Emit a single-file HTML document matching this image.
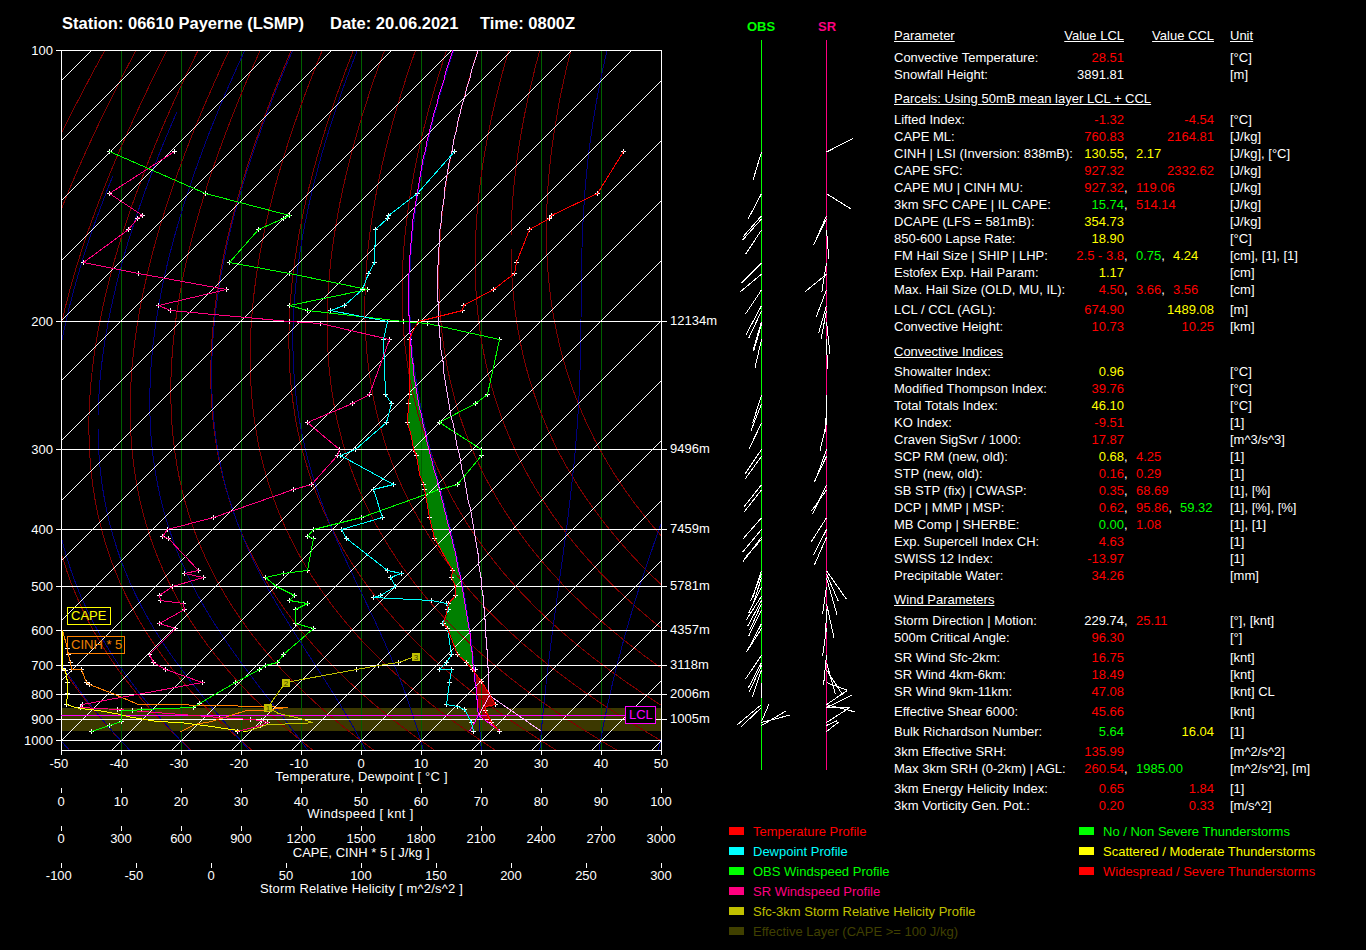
<!DOCTYPE html><html><head><meta charset="utf-8"><style>
html,body{margin:0;padding:0;background:#000;width:1366px;height:950px;overflow:hidden}
body{position:relative;font-family:"Liberation Sans",sans-serif;color:#fff}
.t{position:absolute;white-space:pre;font-size:13px;line-height:15px}
svg{position:absolute;left:0;top:0}
</style></head><body>
<svg width="1366" height="950" viewBox="0 0 1366 950" shape-rendering="crispEdges" fill="none" stroke-width="1">
<defs><clipPath id="c"><rect x="61" y="50" width="601" height="700"/></clipPath></defs>
<g clip-path="url(#c)">
<rect x="61" y="708" width="601" height="23" fill="#3c3800"/>
<path d="M474.1 666.5L473.4 660.5L472.8 654.5L472.0 648.5L471.3 642.5L470.5 636.5L469.7 630.5L468.8 624.5L468.0 618.5L467.0 612.5L466.1 606.5L465.1 600.5L464.0 594.5L462.9 588.5L461.8 582.5L460.7 576.5L459.4 570.5L458.2 564.5L456.9 558.5L455.6 552.5L454.2 546.5L452.8 540.5L451.4 534.5L449.9 528.5L448.4 522.5L446.9 516.5L445.4 510.5L443.8 504.5L442.3 498.5L440.7 492.5L439.1 486.5L437.5 480.5L436.0 474.5L434.4 468.5L432.9 462.5L431.4 456.5L429.9 450.5L428.4 444.5L427.0 438.5L425.6 432.5L424.3 426.5L422.9 420.5L421.7 414.5L420.5 408.5L419.3 402.5L418.2 396.5L417.2 390.5L416.2 384.5L415.3 378.5L414.4 372.5L413.6 366.5L412.9 360.5L412.2 354.5L411.6 348.5L411.1 342.5L410.6 336.5L412.5 331.5L409.9 339.5L409.9 395.3L408.8 403.8L407.8 423.1L411.5 436.8L414.1 449.5L417.3 456.4L419.9 474.7L423.6 484.8L424.7 489.9L426.7 500.5L430.0 517.8L435.1 539.4L452.6 570.8L451.5 577.8L455.7 586.8L455.7 596.3L449.4 603.7L448.3 609.6L444.1 623.7L448.3 628.5L457.8 655.2L467.3 662.6L472.6 670.0 Z" fill="#008000" shape-rendering="auto"/>
<path d="M501.1 731.5L478.7 715.7L478.1 708.5L477.6 702.5L477.1 696.5L476.5 690.5L475.9 684.5L475.3 678.5L474.7 672.5L474.1 666.5L472.6 670.0L481.6 681.5L490.0 694.7L495.8 704.7L485.8 707.3L486.3 711.0L491.5 723.1L500.0 731.5 Z" fill="#a00000" shape-rendering="auto"/>
<path d="M121.5 50V750M181.5 50V750M241.5 50V750M301.5 50V750M361.5 50V750M421.5 50V750M481.5 50V750M541.5 50V750M601.5 50V750" stroke="#006000"/>
<path d="M71.1 752.0L60.2 740.0L50.0 728.0L40.4 716.0L31.4 704.0L23.1 692.0L15.4 680.0L8.2 668.0L1.7 656.0L-4.4 644.0L-9.8 632.0L-14.8 620.0L-19.2 608.0L-23.2 596.0L-26.6 584.0L-29.7 572.0L-32.3 560.0L-34.4 548.0L-36.2 536.0L-37.5 524.0L-38.5 512.0L-39.2 500.0L-39.5 488.0L-39.4 476.0L-39.0 464.0L-38.4 452.0L-37.4 440.0L-36.1 428.0L-34.6 416.0L-32.7 404.0L-30.7 392.0L-28.4 380.0L-25.8 368.0L-23.0 356.0L-20.0 344.0L-16.8 332.0L-13.4 320.0L-9.8 308.0L-6.0 296.0L-2.0 284.0L2.2 272.0L6.5 260.0L11.0 248.0L15.7 236.0L20.5 224.0L25.5 212.0L30.6 200.0L35.8 188.0L41.2 176.0L46.8 164.0L52.4 152.0L58.2 140.0L64.1 128.0L70.1 116.0L76.2 104.0L82.5 92.0L88.8 80.0L95.2 68.0L101.8 56.0L105.1 50.0L108.4 44.0M132.1 752.0L120.2 740.0L109.0 728.0L98.4 716.0L88.5 704.0L79.2 692.0L70.6 680.0L62.6 668.0L55.2 656.0L48.4 644.0L42.2 632.0L36.5 620.0L31.3 608.0L26.6 596.0L22.4 584.0L18.7 572.0L15.5 560.0L12.7 548.0L10.3 536.0L8.4 524.0L6.8 512.0L5.6 500.0L4.7 488.0L4.3 476.0L4.1 464.0L4.3 452.0L4.8 440.0L5.6 428.0L6.6 416.0L8.0 404.0L9.6 392.0L11.5 380.0L13.6 368.0L16.0 356.0L18.6 344.0L21.4 332.0L24.4 320.0L27.7 308.0L31.1 296.0L34.7 284.0L38.6 272.0L42.6 260.0L46.7 248.0L51.1 236.0L55.6 224.0L60.2 212.0L65.0 200.0L70.0 188.0L75.1 176.0L80.3 164.0L85.7 152.0L91.2 140.0L96.8 128.0L102.5 116.0L108.4 104.0L114.4 92.0L120.5 80.0L126.7 68.0L133.0 56.0L136.1 50.0L139.4 44.0M193.1 752.0L180.2 740.0L167.9 728.0L156.4 716.0L145.6 704.0L135.4 692.0L125.9 680.0L117.0 668.0L108.8 656.0L101.2 644.0L94.2 632.0L87.7 620.0L81.8 608.0L76.4 596.0L71.5 584.0L67.2 572.0L63.3 560.0L59.8 548.0L56.8 536.0L54.3 524.0L52.1 512.0L50.3 500.0L49.0 488.0L47.9 476.0L47.3 464.0L46.9 452.0L46.9 440.0L47.2 428.0L47.8 416.0L48.7 404.0L49.9 392.0L51.4 380.0L53.1 368.0L55.0 356.0L57.2 344.0L59.6 332.0L62.3 320.0L65.1 308.0L68.2 296.0L71.5 284.0L74.9 272.0L78.6 260.0L82.4 248.0L86.4 236.0L90.6 224.0L95.0 212.0L99.5 200.0L104.1 188.0L108.9 176.0L113.9 164.0L118.9 152.0L124.2 140.0L129.5 128.0L135.0 116.0L140.6 104.0L146.3 92.0L152.1 80.0L158.1 68.0L164.1 56.0L167.2 50.0L170.3 44.0M254.1 752.0L240.1 740.0L226.9 728.0L214.4 716.0L202.6 704.0L191.5 692.0L181.2 680.0L171.4 668.0L162.4 656.0L154.0 644.0L146.1 632.0L138.9 620.0L132.3 608.0L126.2 596.0L120.6 584.0L115.6 572.0L111.0 560.0L106.9 548.0L103.3 536.0L100.2 524.0L97.4 512.0L95.1 500.0L93.2 488.0L91.6 476.0L90.4 464.0L89.6 452.0L89.1 440.0L88.9 428.0L89.0 416.0L89.5 404.0L90.2 392.0L91.2 380.0L92.5 368.0L94.0 356.0L95.8 344.0L97.9 332.0L100.1 320.0L102.6 308.0L105.3 296.0L108.2 284.0L111.3 272.0L114.6 260.0L118.1 248.0L121.8 236.0L125.7 224.0L129.7 212.0L133.9 200.0L138.3 188.0L142.8 176.0L147.4 164.0L152.2 152.0L157.2 140.0L162.2 128.0L167.4 116.0L172.8 104.0L178.2 92.0L183.8 80.0L189.5 68.0L195.3 56.0L198.3 50.0L201.2 44.0M315.1 752.0L300.1 740.0L285.9 728.0L272.4 716.0L259.7 704.0L247.7 692.0L236.4 680.0L225.9 668.0L216.0 656.0L206.7 644.0L198.1 632.0L190.1 620.0L182.8 608.0L175.9 596.0L169.7 584.0L164.0 572.0L158.8 560.0L154.1 548.0L149.8 536.0L146.1 524.0L142.7 512.0L139.8 500.0L137.4 488.0L135.3 476.0L133.6 464.0L132.2 452.0L131.2 440.0L130.6 428.0L130.2 416.0L130.2 404.0L130.5 392.0L131.1 380.0L131.9 368.0L133.1 356.0L134.4 344.0L136.1 332.0L138.0 320.0L140.1 308.0L142.4 296.0L145.0 284.0L147.7 272.0L150.7 260.0L153.9 248.0L157.2 236.0L160.7 224.0L164.5 212.0L168.3 200.0L172.4 188.0L176.6 176.0L181.0 164.0L185.5 152.0L190.1 140.0L194.9 128.0L199.9 116.0L204.9 104.0L210.2 92.0L215.5 80.0L220.9 68.0L226.5 56.0L229.3 50.0L232.2 44.0M376.1 752.0L360.1 740.0L344.8 728.0L330.4 716.0L316.7 704.0L303.8 692.0L291.7 680.0L280.3 668.0L269.5 656.0L259.5 644.0L250.1 632.0L241.4 620.0L233.2 608.0L225.7 596.0L218.8 584.0L212.4 572.0L206.5 560.0L201.2 548.0L196.3 536.0L192.0 524.0L188.1 512.0L184.6 500.0L181.6 488.0L178.9 476.0L176.7 464.0L174.9 452.0L173.4 440.0L172.2 428.0L171.4 416.0L171.0 404.0L170.8 392.0L170.9 380.0L171.4 368.0L172.1 356.0L173.1 344.0L174.3 332.0L175.8 320.0L177.5 308.0L179.5 296.0L181.7 284.0L184.1 272.0L186.7 260.0L189.6 248.0L192.6 236.0L195.8 224.0L199.2 212.0L202.8 200.0L206.5 188.0L210.4 176.0L214.5 164.0L218.7 152.0L223.1 140.0L227.7 128.0L232.3 116.0L237.1 104.0L242.1 92.0L247.1 80.0L252.3 68.0L257.7 56.0L260.4 50.0L263.1 44.0M437.1 752.0L420.0 740.0L403.8 728.0L388.4 716.0L373.8 704.0L360.0 692.0L347.0 680.0L334.7 668.0L323.1 656.0L312.3 644.0L302.1 632.0L292.6 620.0L283.7 608.0L275.5 596.0L267.9 584.0L260.8 572.0L254.3 560.0L248.3 548.0L242.8 536.0L237.9 524.0L233.4 512.0L229.4 500.0L225.8 488.0L222.6 476.0L219.9 464.0L217.5 452.0L215.5 440.0L213.9 428.0L212.6 416.0L211.7 404.0L211.1 392.0L210.8 380.0L210.8 368.0L211.1 356.0L211.7 344.0L212.5 332.0L213.7 320.0L215.0 308.0L216.6 296.0L218.5 284.0L220.5 272.0L222.8 260.0L225.3 248.0L228.0 236.0L230.9 224.0L234.0 212.0L237.2 200.0L240.7 188.0L244.3 176.0L248.1 164.0L252.0 152.0L256.1 140.0L260.4 128.0L264.8 116.0L269.3 104.0L274.0 92.0L278.8 80.0L283.8 68.0L288.8 56.0L291.4 50.0L294.0 44.0M498.1 752.0L480.0 740.0L462.8 728.0L446.4 716.0L430.9 704.0L416.1 692.0L402.2 680.0L389.1 668.0L376.7 656.0L365.0 644.0L354.1 632.0L343.8 620.0L334.2 608.0L325.3 596.0L316.9 584.0L309.2 572.0L302.0 560.0L295.4 548.0L289.3 536.0L283.8 524.0L278.7 512.0L274.1 500.0L270.0 488.0L266.3 476.0L263.0 464.0L260.1 452.0L257.7 440.0L255.6 428.0L253.8 416.0L252.4 404.0L251.4 392.0L250.7 380.0L250.3 368.0L250.1 356.0L250.3 344.0L250.8 332.0L251.5 320.0L252.5 308.0L253.7 296.0L255.2 284.0L256.9 272.0L258.8 260.0L261.0 248.0L263.4 236.0L265.9 224.0L268.7 212.0L271.7 200.0L274.8 188.0L278.1 176.0L281.6 164.0L285.3 152.0L289.1 140.0L293.1 128.0L297.2 116.0L301.5 104.0L305.9 92.0L310.5 80.0L315.2 68.0L320.0 56.0L322.5 50.0L325.0 44.0M559.1 752.0L540.0 740.0L521.7 728.0L504.4 716.0L487.9 704.0L472.3 692.0L457.5 680.0L443.5 668.0L430.3 656.0L417.8 644.0L406.1 632.0L395.1 620.0L384.7 608.0L375.0 596.0L366.0 584.0L357.6 572.0L349.8 560.0L342.5 548.0L335.8 536.0L329.7 524.0L324.0 512.0L318.9 500.0L314.2 488.0L310.0 476.0L306.2 464.0L302.8 452.0L299.8 440.0L297.2 428.0L295.0 416.0L293.2 404.0L291.7 392.0L290.5 380.0L289.7 368.0L289.2 356.0L288.9 344.0L289.0 332.0L289.3 320.0L289.9 308.0L290.8 296.0L291.9 284.0L293.3 272.0L294.9 260.0L296.7 248.0L298.7 236.0L301.0 224.0L303.4 212.0L306.1 200.0L308.9 188.0L312.0 176.0L315.2 164.0L318.5 152.0L322.1 140.0L325.8 128.0L329.7 116.0L333.7 104.0L337.8 92.0L342.2 80.0L346.6 68.0L351.2 56.0L353.5 50.0L355.9 44.0M620.1 752.0L599.9 740.0L580.7 728.0L562.4 716.0L545.0 704.0L528.4 692.0L512.8 680.0L497.9 668.0L483.8 656.0L470.6 644.0L458.1 632.0L446.3 620.0L435.2 608.0L424.8 596.0L415.1 584.0L406.0 572.0L397.5 560.0L389.7 548.0L382.4 536.0L375.6 524.0L369.4 512.0L363.6 500.0L358.4 488.0L353.6 476.0L349.3 464.0L345.4 452.0L342.0 440.0L338.9 428.0L336.2 416.0L333.9 404.0L332.0 392.0L330.4 380.0L329.1 368.0L328.2 356.0L327.6 344.0L327.2 332.0L327.2 320.0L327.4 308.0L327.9 296.0L328.7 284.0L329.7 272.0L330.9 260.0L332.4 248.0L334.1 236.0L336.1 224.0L338.2 212.0L340.5 200.0L343.1 188.0L345.8 176.0L348.7 164.0L351.8 152.0L355.1 140.0L358.5 128.0L362.1 116.0L365.9 104.0L369.8 92.0L373.8 80.0L378.0 68.0L382.4 56.0L384.6 50.0L386.8 44.0M681.1 752.0L659.9 740.0L639.7 728.0L620.4 716.0L602.0 704.0L584.6 692.0L568.0 680.0L552.3 668.0L537.4 656.0L523.3 644.0L510.0 632.0L497.5 620.0L485.7 608.0L474.6 596.0L464.2 584.0L454.4 572.0L445.3 560.0L436.8 548.0L428.9 536.0L421.5 524.0L414.7 512.0L408.4 500.0L402.6 488.0L397.3 476.0L392.5 464.0L388.1 452.0L384.1 440.0L380.6 428.0L377.4 416.0L374.7 404.0L372.3 392.0L370.3 380.0L368.6 368.0L367.2 356.0L366.2 344.0L365.5 332.0L365.0 320.0L364.9 308.0L365.0 296.0L365.4 284.0L366.1 272.0L367.0 260.0L368.1 248.0L369.5 236.0L371.1 224.0L372.9 212.0L375.0 200.0L377.2 188.0L379.6 176.0L382.3 164.0L385.1 152.0L388.1 140.0L391.2 128.0L394.5 116.0L398.0 104.0L401.7 92.0L405.5 80.0L409.4 68.0L413.5 56.0L415.6 50.0L417.8 44.0M742.0 752.0L719.8 740.0L698.6 728.0L678.4 716.0L659.1 704.0L640.7 692.0L623.3 680.0L606.7 668.0L591.0 656.0L576.1 644.0L562.0 632.0L548.7 620.0L536.2 608.0L524.4 596.0L513.3 584.0L502.8 572.0L493.1 560.0L483.9 548.0L475.4 536.0L467.4 524.0L460.0 512.0L453.1 500.0L446.8 488.0L441.0 476.0L435.6 464.0L430.7 452.0L426.3 440.0L422.2 428.0L418.6 416.0L415.4 404.0L412.6 392.0L410.1 380.0L408.0 368.0L406.2 356.0L404.8 344.0L403.7 332.0L402.9 320.0L402.4 308.0L402.1 296.0L402.2 284.0L402.5 272.0L403.0 260.0L403.8 248.0L404.9 236.0L406.2 224.0L407.7 212.0L409.4 200.0L411.3 188.0L413.5 176.0L415.8 164.0L418.3 152.0L421.0 140.0L423.9 128.0L427.0 116.0L430.2 104.0L433.6 92.0L437.2 80.0L440.9 68.0L444.7 56.0L446.7 50.0L448.7 44.0M803.0 752.0L779.8 740.0L757.6 728.0L736.4 716.0L716.2 704.0L696.9 692.0L678.5 680.0L661.1 668.0L644.6 656.0L628.9 644.0L614.0 632.0L600.0 620.0L586.7 608.0L574.2 596.0L562.3 584.0L551.2 572.0L540.8 560.0L531.0 548.0L521.9 536.0L513.3 524.0L505.3 512.0L497.9 500.0L491.0 488.0L484.6 476.0L478.8 464.0L473.3 452.0L468.4 440.0L463.9 428.0L459.8 416.0L456.2 404.0L452.9 392.0L450.0 380.0L447.4 368.0L445.3 356.0L443.4 344.0L441.9 332.0L440.7 320.0L439.8 308.0L439.2 296.0L438.9 284.0L438.9 272.0L439.1 260.0L439.6 248.0L440.3 236.0L441.2 224.0L442.4 212.0L443.8 200.0L445.5 188.0L447.3 176.0L449.4 164.0L451.6 152.0L454.0 140.0L456.6 128.0L459.4 116.0L462.4 104.0L465.5 92.0L468.8 80.0L472.3 68.0L475.9 56.0L477.8 50.0L479.7 44.0M864.0 752.0L839.8 740.0L816.6 728.0L794.4 716.0L773.2 704.0L753.0 692.0L733.8 680.0L715.5 668.0L698.1 656.0L681.6 644.0L666.0 632.0L651.2 620.0L637.2 608.0L623.9 596.0L611.4 584.0L599.6 572.0L588.6 560.0L578.1 548.0L568.4 536.0L559.2 524.0L550.6 512.0L542.7 500.0L535.2 488.0L528.3 476.0L521.9 464.0L516.0 452.0L510.6 440.0L505.6 428.0L501.0 416.0L496.9 404.0L493.2 392.0L489.8 380.0L486.9 368.0L484.3 356.0L482.0 344.0L480.1 332.0L478.6 320.0L477.3 308.0L476.3 296.0L475.6 284.0L475.2 272.0L475.1 260.0L475.3 248.0L475.7 236.0L476.3 224.0L477.2 212.0L478.3 200.0L479.6 188.0L481.2 176.0L482.9 164.0L484.9 152.0L487.0 140.0L489.4 128.0L491.9 116.0L494.6 104.0L497.5 92.0L500.5 80.0L503.7 68.0L507.1 56.0L508.8 50.0L510.6 44.0M925.0 752.0L899.7 740.0L875.5 728.0L852.4 716.0L830.3 704.0L809.2 692.0L789.1 680.0L769.9 668.0L751.7 656.0L734.4 644.0L718.0 632.0L702.4 620.0L687.7 608.0L673.7 596.0L660.5 584.0L648.1 572.0L636.3 560.0L625.3 548.0L614.9 536.0L605.1 524.0L596.0 512.0L587.4 500.0L579.4 488.0L572.0 476.0L565.0 464.0L558.6 452.0L552.7 440.0L547.2 428.0L542.2 416.0L537.6 404.0L533.5 392.0L529.7 380.0L526.3 368.0L523.3 356.0L520.7 344.0L518.4 332.0L516.4 320.0L514.8 308.0L513.4 296.0L512.4 284.0L511.6 272.0L511.2 260.0L511.0 248.0L511.0 236.0L511.4 224.0L511.9 212.0L512.7 200.0L513.7 188.0L515.0 176.0L516.5 164.0L518.1 152.0L520.0 140.0L522.1 128.0L524.3 116.0L526.8 104.0L529.4 92.0L532.2 80.0L535.1 68.0L538.2 56.0L539.9 50.0L541.5 44.0M986.0 752.0L959.7 740.0L934.5 728.0L910.4 716.0L887.4 704.0L865.3 692.0L844.3 680.0L824.3 668.0L805.3 656.0L787.2 644.0L770.0 632.0L753.6 620.0L738.2 608.0L723.5 596.0L709.6 584.0L696.5 572.0L684.1 560.0L672.4 548.0L661.4 536.0L651.0 524.0L641.3 512.0L632.2 500.0L623.6 488.0L615.6 476.0L608.2 464.0L601.3 452.0L594.8 440.0L588.9 428.0L583.4 416.0L578.4 404.0L573.8 392.0L569.6 380.0L565.8 368.0L562.3 356.0L559.3 344.0L556.6 332.0L554.2 320.0L552.2 308.0L550.5 296.0L549.1 284.0L548.0 272.0L547.2 260.0L546.7 248.0L546.4 236.0L546.4 224.0L546.7 212.0L547.2 200.0L547.9 188.0L548.8 176.0L550.0 164.0L551.4 152.0L553.0 140.0L554.8 128.0L556.8 116.0L558.9 104.0L561.3 92.0L563.8 80.0L566.5 68.0L569.4 56.0L570.9 50.0L572.5 44.0" stroke="#800000"/>
<path d="M70.9 752.0L60.2 740.0L50.2 728.0L40.8 716.0L31.9 704.0L23.7 692.0L16.0 680.0L8.9 668.0L2.4 656.0L-3.5 644.0L-9.0 632.0L-13.9 620.0L-18.3 608.0L-22.2 596.0L-25.7 584.0L-28.7 572.0L-31.2 560.0L-33.4 548.0L-35.1 536.0L-36.5 524.0L-37.4 512.0L-38.1 500.0L-38.3 488.0L-38.3 476.0L-37.9 464.0L-37.2 452.0L-36.2 440.0L-34.9 428.0L-33.3 416.0L-31.5 404.0L-29.4 392.0L-27.1 380.0L-24.5 368.0L-21.8 356.0L-18.7 344.0L-15.5 332.0L-12.1 320.0L-8.5 308.0L-4.6 296.0L-3.6 292.7M131.4 752.0L120.2 740.0L109.5 728.0L99.3 716.0L89.7 704.0L80.6 692.0L72.2 680.0L64.3 668.0L56.9 656.0L50.2 644.0L44.0 632.0L38.3 620.0L33.2 608.0L28.5 596.0L24.4 584.0L20.7 572.0L17.4 560.0L14.7 548.0L12.3 536.0L10.3 524.0L8.8 512.0L7.6 500.0L6.8 488.0L6.3 476.0L6.1 464.0L6.3 452.0L6.8 440.0L7.6 428.0L8.7 416.0L10.0 404.0L11.7 392.0L13.6 380.0L15.7 368.0L18.1 356.0L20.7 344.0L23.5 332.0L26.5 320.0L29.8 308.0L33.2 296.0L36.8 284.0L40.7 272.0L44.7 260.0L48.8 248.0L53.4 235.3M191.5 752.0L180.2 740.0L169.2 728.0L158.6 716.0L148.4 704.0L138.7 692.0L129.6 680.0L120.9 668.0L112.9 656.0L105.4 644.0L98.4 632.0L92.0 620.0L86.1 608.0L80.7 596.0L75.9 584.0L71.5 572.0L67.6 560.0L64.1 548.0L61.1 536.0L58.5 524.0L56.4 512.0L54.6 500.0L53.2 488.0L52.1 476.0L51.4 464.0L51.1 452.0L51.1 440.0L51.4 428.0L52.0 416.0L52.8 404.0L54.0 392.0L55.4 380.0L57.1 368.0L59.1 356.0L61.2 344.0L63.6 332.0L66.3 320.0L69.1 308.0L72.2 296.0L75.5 284.0L78.9 272.0L82.5 260.0L86.4 248.0L90.4 236.0L94.5 224.0L98.9 212.0L103.4 200.0L108.0 188.0L112.8 176.0M250.8 752.0L240.2 740.0L229.7 728.0L219.2 716.0L209.0 704.0L199.1 692.0L189.6 680.0L180.5 668.0L171.8 656.0L163.6 644.0L156.0 632.0L148.9 620.0L142.3 608.0L136.2 596.0L130.6 584.0L125.5 572.0L120.9 560.0L116.8 548.0L113.1 536.0L109.8 524.0L107.0 512.0L104.6 500.0L102.6 488.0L101.0 476.0L99.7 464.0L98.8 452.0L98.2 440.0L98.0 428.0L98.0 416.0L98.4 404.0L99.1 392.0L100.0 380.0L101.2 368.0L102.7 356.0L104.4 344.0L106.4 332.0L108.6 320.0L111.1 308.0L113.7 296.0L116.6 284.0L119.6 272.0L122.9 260.0L126.3 248.0L130.0 236.0L133.8 224.0L137.8 212.0L141.9 200.0L146.2 188.0L150.7 176.0L155.3 164.0L160.0 152.0L164.9 140.0L170.0 128.0L175.1 116.0L176.7 112.3M309.1 752.0L300.3 740.0L291.2 728.0L282.0 716.0L272.7 704.0L263.3 692.0L254.1 680.0L245.1 668.0L236.3 656.0L227.9 644.0L219.8 632.0L212.2 620.0L204.9 608.0L198.2 596.0L191.9 584.0L186.1 572.0L180.8 560.0L175.9 548.0L171.5 536.0L167.6 524.0L164.0 512.0L160.9 500.0L158.3 488.0L156.0 476.0L154.1 464.0L152.5 452.0L151.3 440.0L150.5 428.0L150.0 416.0L149.8 404.0L149.9 392.0L150.3 380.0L150.9 368.0L151.9 356.0L153.1 344.0L154.6 332.0L156.3 320.0L158.3 308.0L160.5 296.0L162.9 284.0L165.5 272.0L168.3 260.0L171.4 248.0L174.6 236.0L178.0 224.0L181.6 212.0L185.3 200.0L189.2 188.0L193.3 176.0L197.6 164.0L202.0 152.0L206.5 140.0L211.2 128.0L216.1 116.0L221.0 104.0L226.1 92.0L231.3 80.0L236.7 68.0L242.2 56.0L244.9 50.0L247.7 44.0M366.6 752.0L360.4 740.0L353.8 728.0L346.9 716.0L339.8 704.0L332.4 692.0L324.8 680.0L317.1 668.0L309.3 656.0L301.6 644.0L293.9 632.0L286.4 620.0L279.1 608.0L272.1 596.0L265.4 584.0L259.1 572.0L253.1 560.0L247.6 548.0L242.5 536.0L237.8 524.0L233.5 512.0L229.6 500.0L226.1 488.0L223.1 476.0L220.4 464.0L218.1 452.0L216.2 440.0L214.6 428.0L213.4 416.0L212.5 404.0L211.9 392.0L211.7 380.0L211.7 368.0L212.0 356.0L212.6 344.0L213.5 332.0L214.6 320.0L216.0 308.0L217.7 296.0L219.5 284.0L221.6 272.0L223.9 260.0L226.4 248.0L229.1 236.0L232.0 224.0L235.1 212.0L238.4 200.0L241.9 188.0L245.5 176.0L249.3 164.0L253.3 152.0L257.4 140.0L261.7 128.0L266.1 116.0L270.6 104.0L275.3 92.0L280.2 80.0L285.1 68.0L290.2 56.0L292.8 50.0L295.4 44.0M423.9 752.0L420.5 740.0L416.9 728.0L413.1 716.0L409.0 704.0L404.8 692.0L400.3 680.0L395.5 668.0L390.5 656.0L385.3 644.0L379.9 632.0L374.4 620.0L368.7 608.0L362.9 596.0L357.1 584.0L351.4 572.0L345.8 560.0L340.3 548.0L335.0 536.0L329.9 524.0L325.1 512.0L320.7 500.0L316.5 488.0L312.7 476.0L309.2 464.0L306.0 452.0L303.3 440.0L300.8 428.0L298.7 416.0L296.9 404.0L295.5 392.0L294.4 380.0L293.6 368.0L293.1 356.0L292.9 344.0L292.9 332.0L293.3 320.0L293.9 308.0L294.8 296.0L295.9 284.0L297.2 272.0L298.8 260.0L300.6 248.0L302.7 236.0L304.9 224.0L307.4 212.0L310.0 200.0L312.8 188.0L315.9 176.0L319.1 164.0L322.4 152.0L326.0 140.0L329.7 128.0L333.6 116.0L337.6 104.0L341.7 92.0L346.0 80.0L350.5 68.0L355.1 56.0L357.4 50.0L359.8 44.0M481.4 752.0L480.6 740.0L479.7 728.0L478.7 716.0L477.7 704.0L476.7 692.0L475.6 680.0L474.3 668.0L473.0 656.0L471.6 644.0L470.1 632.0L468.4 620.0L466.6 608.0L464.6 596.0L462.4 584.0L460.1 572.0L457.6 560.0L455.0 548.0L452.2 536.0L449.3 524.0L446.3 512.0L443.2 500.0L440.1 488.0L437.0 476.0L433.9 464.0L430.9 452.0L428.0 440.0L425.2 428.0L422.6 416.0L420.2 404.0L418.1 392.0L416.1 380.0L414.4 368.0L412.9 356.0L411.7 344.0L410.8 332.0L410.1 320.0L409.7 308.0L409.5 296.0L409.6 284.0L410.0 272.0L410.6 260.0L411.4 248.0L412.4 236.0L413.7 224.0L415.2 212.0L416.9 200.0L418.8 188.0L420.9 176.0L423.2 164.0L425.7 152.0L428.4 140.0L431.3 128.0L434.3 116.0L437.5 104.0L440.9 92.0L444.4 80.0L448.1 68.0L451.9 56.0L453.9 50.0L455.9 44.0M539.7 752.0L540.6 740.0L541.6 728.0L542.7 716.0L543.9 704.0L545.2 692.0L546.5 680.0L547.9 668.0L549.4 656.0L550.9 644.0L552.4 632.0L554.0 620.0L555.7 608.0L557.3 596.0L559.0 584.0L560.6 572.0L562.3 560.0L563.9 548.0L565.5 536.0L567.1 524.0L568.6 512.0L570.0 500.0L571.4 488.0L572.7 476.0L574.0 464.0L575.1 452.0L576.1 440.0L577.1 428.0L577.9 416.0L578.6 404.0L579.2 392.0L579.7 380.0L580.1 368.0L580.4 356.0L580.6 344.0L580.8 332.0L581.0 320.0L581.1 308.0L581.2 296.0L581.3 284.0L581.5 272.0L581.7 260.0L582.0 248.0L582.4 236.0L582.9 224.0L583.6 212.0L584.3 200.0L585.2 188.0L586.3 176.0L587.5 164.0L588.8 152.0L590.4 140.0L592.1 128.0L594.0 116.0L596.0 104.0L598.2 92.0L600.5 80.0L603.1 68.0L605.7 56.0L607.1 50.0L608.6 44.0M598.6 752.0L600.7 740.0L602.9 728.0L605.3 716.0L607.8 704.0L610.5 692.0L613.3 680.0L616.3 668.0L619.4 656.0L622.6 644.0L625.9 632.0L629.4 620.0L632.9 608.0L636.6 596.0L640.4 584.0L644.3 572.0L648.4 560.0L652.5 548.0L656.6 536.0L660.9 524.0L665.3 512.0L669.7 500.0L674.2 488.0L678.8 476.0L683.4 464.0L688.1 452.0L692.9 440.0L697.7 428.0L702.5 416.0L707.4 404.0L712.3 392.0L717.2 380.0L722.2 368.0L727.1 356.0L732.1 344.0L737.1 332.0L742.1 320.0L747.1 308.0L752.1 296.0L757.1 284.0L762.0 272.0L767.0 260.0L771.9 248.0L776.8 236.0L781.6 224.0L786.4 212.0L791.2 200.0L795.9 188.0L800.5 176.0L805.1 164.0L809.7 152.0L814.2 140.0L818.6 128.0L822.9 116.0L827.2 104.0L831.4 92.0L835.6 80.0L839.6 68.0L843.7 56.0L845.6 50.0L847.6 44.0M657.8 752.0L660.7 740.0L663.7 728.0L666.9 716.0L670.3 704.0L673.9 692.0L677.6 680.0L681.4 668.0L685.4 656.0L689.6 644.0L693.9 632.0L698.4 620.0L703.0 608.0L707.8 596.0L712.7 584.0L717.7 572.0L722.9 560.0L728.2 548.0L733.6 536.0L739.2 524.0L744.8 512.0L750.6 500.0L756.5 488.0L762.5 476.0L768.5 464.0L774.7 452.0L781.0 440.0L787.4 428.0L793.8 416.0L800.4 404.0L807.0 392.0L813.7 380.0L820.5 368.0L827.4 356.0L834.3 344.0L841.3 332.0L848.4 320.0L855.5 308.0L862.7 296.0L869.9 284.0L877.3 272.0L884.6 260.0L892.0 248.0L899.5 236.0L907.0 224.0L914.6 212.0L922.2 200.0L929.9 188.0L937.6 176.0L945.4 164.0L953.2 152.0L961.0 140.0L968.9 128.0L976.8 116.0L984.7 104.0L992.7 92.0L1000.7 80.0L1008.7 68.0L1016.8 56.0L1020.8 50.0L1024.8 44.0" stroke="#000080"/>
<path d="M-668.5 750.5L31.5 50.5M-608.5 750.5L91.5 50.5M-548.5 750.5L151.5 50.5M-488.5 750.5L211.5 50.5M-428.5 750.5L271.5 50.5M-368.5 750.5L331.5 50.5M-308.5 750.5L391.5 50.5M-248.5 750.5L451.5 50.5M-188.5 750.5L511.5 50.5M-128.5 750.5L571.5 50.5M-68.5 750.5L631.5 50.5M-8.5 750.5L691.5 50.5M51.5 750.5L751.5 50.5M111.5 750.5L811.5 50.5M171.5 750.5L871.5 50.5M231.5 750.5L931.5 50.5M291.5 750.5L991.5 50.5M351.5 750.5L1051.5 50.5M411.5 750.5L1111.5 50.5M471.5 750.5L1171.5 50.5M531.5 750.5L1231.5 50.5M591.5 750.5L1291.5 50.5M651.5 750.5L1351.5 50.5" stroke="#ffffff"/>
</g>
<path d="M56 50.5H661M56 321.5H661M56 449.5H661M56 529.5H661M56 586.5H661M56 630.5H661M56 665.5H661M56 694.5H661M56 719.5H661M56 740.5H661M61.5 50V750M661.5 50V750M61 750.5H662" stroke="#ffffff"/>
<g clip-path="url(#c)">
<path d="M621 151.5h5M623.5 149v5M595 193.5h5M597.5 191v5M549 215.5h5M551.5 213v5M547 218.5h5M549.5 216v5M527 229.5h5M529.5 227v5M514 262.5h5M516.5 260v5M512 273.5h5M514.5 271v5M491 289.5h5M493.5 287v5M461 305.5h5M463.5 303v5M460 310.5h5M462.5 308v5M416 321.5h5M418.5 319v5M407 339.5h5M409.5 337v5M407 394.5h5M409.5 392v5M406 403.5h5M408.5 401v5M405 422.5h5M407.5 420v5M411 449.5h5M413.5 447v5M414 455.5h5M416.5 453v5M421 484.5h5M423.5 482v5M422 489.5h5M424.5 487v5M427 517.5h5M429.5 515v5M432 538.5h5M434.5 536v5M450 570.5h5M452.5 568v5M449 577.5h5M451.5 575v5M453 595.5h5M455.5 593v5M446 603.5h5M448.5 601v5M445 609.5h5M447.5 607v5M441 623.5h5M443.5 621v5M445 628.5h5M447.5 626v5M455 654.5h5M457.5 652v5M464 662.5h5M466.5 660v5M470 669.5h5M472.5 667v5M473 669.5h5M475.5 667v5M479 681.5h5M481.5 679v5M493 704.5h5M495.5 702v5M483 710.5h5M485.5 708v5M489 722.5h5M491.5 720v5M497 731.5h5M499.5 729v5M452 151.5h5M454.5 149v5M415 193.5h5M417.5 191v5M386 215.5h5M388.5 213v5M385 218.5h5M387.5 216v5M373 229.5h5M375.5 227v5M372 262.5h5M374.5 260v5M366 273.5h5M368.5 271v5M360 289.5h5M362.5 287v5M342 305.5h5M344.5 303v5M328 310.5h5M330.5 308v5M385 321.5h5M387.5 319v5M381 339.5h5M383.5 337v5M383 394.5h5M385.5 392v5M389 403.5h5M391.5 401v5M384 422.5h5M386.5 420v5M353 449.5h5M355.5 447v5M338 455.5h5M340.5 453v5M391 484.5h5M393.5 482v5M371 489.5h5M373.5 487v5M380 517.5h5M382.5 515v5M339 529.5h5M341.5 527v5M344 538.5h5M346.5 536v5M385 570.5h5M387.5 568v5M399 573.5h5M401.5 571v5M388 577.5h5M390.5 575v5M393 586.5h5M395.5 584v5M378 595.5h5M380.5 593v5M371 597.5h5M373.5 595v5M429 600.5h5M431.5 598v5M444 603.5h5M446.5 601v5M446 609.5h5M448.5 607v5M440 623.5h5M442.5 621v5M445 628.5h5M447.5 626v5M449 654.5h5M451.5 652v5M444 662.5h5M446.5 660v5M437 669.5h5M439.5 667v5M449 669.5h5M451.5 667v5M447 682.5h5M449.5 680v5M444 704.5h5M446.5 702v5M455 706.5h5M457.5 704v5M462 709.5h5M464.5 707v5M469 722.5h5M471.5 720v5M471 731.5h5M473.5 729v5M107 151.5h5M109.5 149v5M203 193.5h5M205.5 191v5M287 215.5h5M289.5 213v5M281 218.5h5M283.5 216v5M256 229.5h5M258.5 227v5M227 262.5h5M229.5 260v5M287 273.5h5M289.5 271v5M365 289.5h5M367.5 287v5M287 305.5h5M289.5 303v5M305 310.5h5M307.5 308v5M401 321.5h5M403.5 319v5M425 323.5h5M427.5 321v5M497 339.5h5M499.5 337v5M485 394.5h5M487.5 392v5M473 403.5h5M475.5 401v5M437 422.5h5M439.5 420v5M479 449.5h5M481.5 447v5M479 455.5h5M481.5 453v5M455 484.5h5M457.5 482v5M437 489.5h5M439.5 487v5M359 517.5h5M361.5 515v5M311 529.5h5M313.5 527v5M305 536.5h5M307.5 534v5M311 538.5h5M313.5 536v5M305 570.5h5M307.5 568v5M281 573.5h5M283.5 571v5M263 577.5h5M265.5 575v5M274 586.5h5M276.5 584v5M292 595.5h5M294.5 593v5M287 600.5h5M289.5 598v5M305 603.5h5M307.5 601v5M293 609.5h5M295.5 607v5M293 623.5h5M295.5 621v5M311 628.5h5M313.5 626v5M281 654.5h5M283.5 652v5M275 662.5h5M277.5 660v5M263 665.5h5M265.5 663v5M257 669.5h5M259.5 667v5M233 682.5h5M235.5 680v5M197 703.5h5M199.5 701v5M191 707.5h5M193.5 705v5M139 709.5h5M141.5 707v5M130 710.5h5M132.5 708v5M119 710.5h5M121.5 708v5M119 721.5h5M121.5 719v5M107 725.5h5M109.5 723v5M89 731.5h5M91.5 729v5M172 151.5h5M174.5 149v5M107 193.5h5M109.5 191v5M140 215.5h5M142.5 213v5M135 218.5h5M137.5 216v5M126 229.5h5M128.5 227v5M81 262.5h5M83.5 260v5M136 273.5h5M138.5 271v5M224 289.5h5M226.5 287v5M156 305.5h5M158.5 303v5M168 310.5h5M170.5 308v5M287 321.5h5M289.5 319v5M318 323.5h5M320.5 321v5M387 339.5h5M389.5 337v5M367 394.5h5M369.5 392v5M350 403.5h5M352.5 401v5M305 422.5h5M307.5 420v5M337 449.5h5M339.5 447v5M335 455.5h5M337.5 453v5M309 484.5h5M311.5 482v5M291 489.5h5M293.5 487v5M211 517.5h5M213.5 515v5M165 529.5h5M167.5 527v5M160 536.5h5M162.5 534v5M166 538.5h5M168.5 536v5M196 570.5h5M198.5 568v5M182 573.5h5M184.5 571v5M201 577.5h5M203.5 575v5M170 586.5h5M172.5 584v5M157 595.5h5M159.5 593v5M158 600.5h5M160.5 598v5M181 603.5h5M183.5 601v5M182 609.5h5M184.5 607v5M157 623.5h5M159.5 621v5M173 628.5h5M175.5 626v5M147 654.5h5M149.5 652v5M151 662.5h5M153.5 660v5M163 669.5h5M165.5 667v5M200 682.5h5M202.5 680v5M80 704.5h5M82.5 702v5M78 707.5h5M80.5 705v5M115 709.5h5M117.5 707v5M217 717.5h5M219.5 715v5M248 719.5h5M250.5 717v5M259 720.5h5M261.5 718v5M265 722.5h5M267.5 720v5M258 725.5h5M260.5 723v5M235 731.5h5M237.5 729v5M396 662.5h5M398.5 660v5M376 665.5h5M378.5 663v5M354 669.5h5M356.5 667v5M60 668.5h5M62.5 666v5M63 670.5h5M65.5 668v5M65 682.5h5M67.5 680v5M65 693.5h5M67.5 691v5M64 704.5h5M66.5 702v5M65 648.5h5M67.5 646v5M66 654.5h5M68.5 652v5M68 662.5h5M70.5 660v5M69 669.5h5M71.5 667v5M79 669.5h5M81.5 667v5M84 682.5h5M86.5 680v5M87 684.5h5M89.5 682v5" stroke="#ffffff"/>
<path d="M61 715.5H625" stroke="#ff00ff"/>
<path d="M415.5 656.5L398.5 662.5L378.5 665.5L356.5 669.5L285.5 682.5L270.5 703.5L267.5 707.5L278.5 713.5L300.5 718.5L312.5 722.5L303.5 723.5L267.5 724.5L246.5 731.5" stroke="#c0c000"/>
<path d="M62.5 630.5L67.5 648.5L68.5 654.5L70.5 662.5L71.5 669.5L81.5 669.5L86.5 682.5L89.5 684.5L112.5 693.5L138.5 704.5L163.5 704.5L213.5 705.5L261.5 706.5L287.5 707.5L260.5 710.5L246.5 710.5L211.5 721.5L194.5 724.5L185.5 729.5L180.5 731.5" stroke="#ff8000"/>
<path d="M62.5 630.5L62.5 668.5L65.5 670.5L67.5 682.5L67.5 693.5L66.5 704.5L75.5 707.5L80.5 708.5L98.5 710.5L120.5 714.5L127.5 716.5L156.5 721.5L179.5 722.5L204.5 725.5L231.5 729.5L246.5 731.5" stroke="#ffff00"/>
<path d="M174.5 151.5L109.5 193.5L142.5 215.5L137.5 218.5L128.5 229.5L83.5 262.5L138.5 273.5L226.5 289.5L158.5 305.5L170.5 310.5L289.5 321.5L320.5 323.5L389.5 339.5L369.5 394.5L352.5 403.5L307.5 422.5L339.5 449.5L337.5 455.5L311.5 484.5L293.5 489.5L213.5 517.5L167.5 529.5L162.5 536.5L168.5 538.5L198.5 570.5L184.5 573.5L203.5 577.5L172.5 586.5L159.5 595.5L160.5 600.5L183.5 603.5L184.5 609.5L159.5 623.5L175.5 628.5L149.5 654.5L153.5 662.5L165.5 669.5L202.5 682.5L82.5 704.5L80.5 707.5L117.5 709.5L219.5 717.5L250.5 719.5L261.5 720.5L267.5 722.5L260.5 725.5L237.5 731.5" stroke="#ff0080"/>
<path d="M109.5 151.5L205.5 193.5L289.5 215.5L283.5 218.5L258.5 229.5L229.5 262.5L289.5 273.5L367.5 289.5L289.5 305.5L307.5 310.5L403.5 321.5L427.5 323.5L499.5 339.5L487.5 394.5L475.5 403.5L439.5 422.5L481.5 449.5L481.5 455.5L457.5 484.5L439.5 489.5L361.5 517.5L313.5 529.5L307.5 536.5L313.5 538.5L307.5 570.5L283.5 573.5L265.5 577.5L276.5 586.5L294.5 595.5L289.5 600.5L307.5 603.5L295.5 609.5L295.5 623.5L313.5 628.5L283.5 654.5L277.5 662.5L265.5 665.5L259.5 669.5L235.5 682.5L199.5 703.5L193.5 707.5L141.5 709.5L132.5 710.5L121.5 710.5L121.5 721.5L109.5 725.5L91.5 731.5" stroke="#00ff00"/>
<path d="M489.5 695.5L488.5 688.5L488.5 682.5L488.5 676.5L488.5 670.5L487.5 664.5L487.5 658.5L487.5 652.5L486.5 646.5L486.5 640.5L485.5 634.5L485.5 628.5L485.5 622.5L484.5 616.5L484.5 610.5L483.5 604.5L483.5 598.5L482.5 592.5L481.5 586.5L481.5 580.5L480.5 574.5L479.5 568.5L478.5 562.5L478.5 556.5L477.5 550.5L476.5 544.5L475.5 538.5L474.5 532.5L473.5 526.5L472.5 520.5L471.5 514.5L470.5 508.5L468.5 502.5L467.5 496.5L466.5 490.5L465.5 484.5L464.5 478.5L462.5 472.5L461.5 466.5L460.5 460.5L459.5 454.5L457.5 448.5L456.5 442.5L455.5 436.5L454.5 430.5L453.5 424.5L451.5 418.5L450.5 412.5L449.5 406.5L448.5 400.5L447.5 394.5L446.5 388.5L445.5 382.5L444.5 376.5L443.5 370.5L443.5 364.5L442.5 358.5L441.5 352.5L440.5 346.5L440.5 340.5L439.5 334.5L439.5 328.5L438.5 322.5L438.5 316.5L438.5 310.5L438.5 304.5L437.5 298.5L437.5 292.5L437.5 286.5L437.5 280.5L437.5 274.5L437.5 268.5L438.5 262.5L438.5 256.5L438.5 250.5L439.5 244.5L439.5 238.5L439.5 232.5L440.5 226.5L441.5 220.5L441.5 214.5L442.5 208.5L443.5 202.5L444.5 196.5L444.5 190.5L445.5 184.5L446.5 178.5L447.5 172.5L448.5 166.5L449.5 160.5L451.5 154.5L452.5 148.5L453.5 142.5L454.5 136.5L456.5 130.5L457.5 124.5L458.5 118.5L460.5 112.5L461.5 106.5L463.5 100.5L465.5 94.5L466.5 88.5L468.5 82.5L470.5 76.5L471.5 70.5L473.5 64.5L475.5 58.5L477.5 52.5L479.5 46.5M541.5 731.5L489.5 695.5L478.5 715.5" stroke="#ffb0ff"/>
<path d="M478.5 715.5L477.5 708.5L477.5 702.5L476.5 696.5L476.5 690.5L475.5 684.5L474.5 678.5L474.5 672.5L473.5 666.5L472.5 660.5L472.5 654.5L471.5 648.5L470.5 642.5L470.5 636.5L469.5 630.5L468.5 624.5L467.5 618.5L466.5 612.5L465.5 606.5L464.5 600.5L463.5 594.5L462.5 588.5L461.5 582.5L460.5 576.5L458.5 570.5L457.5 564.5L456.5 558.5L455.5 552.5L453.5 546.5L452.5 540.5L450.5 534.5L449.5 528.5L447.5 522.5L446.5 516.5L444.5 510.5L443.5 504.5L441.5 498.5L440.5 492.5L438.5 486.5L437.5 480.5L435.5 474.5L433.5 468.5L432.5 462.5L430.5 456.5L429.5 450.5L427.5 444.5L426.5 438.5L425.5 432.5L423.5 426.5L422.5 420.5L421.5 414.5L419.5 408.5L418.5 402.5L417.5 396.5L416.5 390.5L415.5 384.5L414.5 378.5L413.5 372.5L413.5 366.5L412.5 360.5L411.5 354.5L411.5 348.5L410.5 342.5L410.5 336.5L409.5 330.5L409.5 324.5L409.5 318.5L408.5 312.5L408.5 306.5L408.5 300.5L408.5 294.5L408.5 288.5L408.5 282.5L408.5 276.5L409.5 270.5L409.5 264.5L409.5 258.5L410.5 252.5L410.5 246.5L411.5 240.5L411.5 234.5L412.5 228.5L412.5 222.5L413.5 216.5L414.5 210.5L415.5 204.5L416.5 198.5L417.5 192.5L418.5 186.5L419.5 180.5L420.5 174.5L421.5 168.5L422.5 162.5L423.5 156.5L425.5 150.5L426.5 144.5L427.5 138.5L429.5 132.5L430.5 126.5L432.5 120.5L433.5 114.5L435.5 108.5L437.5 102.5L438.5 96.5L440.5 90.5L442.5 84.5L444.5 78.5L445.5 72.5L447.5 66.5L449.5 60.5L451.5 54.5L453.5 48.5M469.5 731.5L478.5 715.5L500.5 731.5" stroke="#ff00ff"/>
<path d="M454.5 151.5L417.5 193.5L388.5 215.5L387.5 218.5L375.5 229.5L374.5 262.5L368.5 273.5L362.5 289.5L344.5 305.5L330.5 310.5L387.5 321.5L383.5 339.5L385.5 394.5L391.5 403.5L386.5 422.5L355.5 449.5L340.5 455.5L393.5 484.5L373.5 489.5L382.5 517.5L341.5 529.5L346.5 538.5L387.5 570.5L401.5 573.5L390.5 577.5L395.5 586.5L380.5 595.5L373.5 597.5L431.5 600.5L446.5 603.5L448.5 609.5L442.5 623.5L447.5 628.5L451.5 654.5L446.5 662.5L439.5 669.5L451.5 669.5L449.5 682.5L446.5 704.5L457.5 706.5L464.5 709.5L471.5 722.5L473.5 731.5" stroke="#00ffff"/>
<path d="M623.5 151.5L597.5 193.5L551.5 215.5L549.5 218.5L529.5 229.5L516.5 262.5L514.5 273.5L493.5 289.5L463.5 305.5L462.5 310.5L418.5 321.5L412.5 331.5L409.5 339.5L409.5 394.5L408.5 403.5L407.5 422.5L411.5 436.5L413.5 449.5L416.5 455.5L419.5 474.5L423.5 484.5L424.5 489.5L426.5 500.5L429.5 517.5L434.5 538.5L452.5 570.5L451.5 577.5L455.5 586.5L455.5 595.5L448.5 603.5L447.5 609.5L443.5 623.5L447.5 628.5L457.5 654.5L466.5 662.5L472.5 669.5L481.5 681.5L489.5 694.5L495.5 704.5L485.5 706.5L485.5 710.5L491.5 722.5L499.5 731.5" stroke="#ff0000"/>
<rect x="412" y="653" width="8" height="8" fill="#c0c000"/>
<text x="416" y="660" font-size="8" font-family="Liberation Sans" fill="#404000" stroke="none" text-anchor="middle">3</text>
<rect x="282" y="679" width="8" height="8" fill="#c0c000"/>
<text x="286" y="686" font-size="8" font-family="Liberation Sans" fill="#404000" stroke="none" text-anchor="middle">2</text>
<rect x="264" y="704" width="8" height="8" fill="#c0c000"/>
<text x="268" y="711" font-size="8" font-family="Liberation Sans" fill="#404000" stroke="none" text-anchor="middle">1</text>
<rect x="625.5" y="706.5" width="30" height="17" fill="#000" stroke="#ff00ff"/>
<rect x="67.5" y="607.5" width="43" height="17" fill="none" stroke="#ffff00"/>
<rect x="67.5" y="636.5" width="57" height="17" fill="none" stroke="#ff8000"/>
</g>
<path d="M61.5 750V755M61.5 788V793M61.5 826V831M121.5 750V755M121.5 788V793M121.5 826V831M181.5 750V755M181.5 788V793M181.5 826V831M241.5 750V755M241.5 788V793M241.5 826V831M301.5 750V755M301.5 788V793M301.5 826V831M361.5 750V755M361.5 788V793M361.5 826V831M421.5 750V755M421.5 788V793M421.5 826V831M481.5 750V755M481.5 788V793M481.5 826V831M541.5 750V755M541.5 788V793M541.5 826V831M601.5 750V755M601.5 788V793M601.5 826V831M661.5 750V755M661.5 788V793M661.5 826V831M61.5 863V868M136.5 863V868M211.5 863V868M286.5 863V868M361.5 863V868M436.5 863V868M511.5 863V868M586.5 863V868M661.5 863V868M661 321.5H667M661 449.5H667M661 529.5H667M661 586.5H667M661 630.5H667M661 665.5H667M661 694.5H667M661 719.5H667" stroke="#fff"/>
<path d="M761.5 40V770" stroke="#00ff00"/>
<path d="M826.5 40V770" stroke="#ff0080"/>
<path d="M761.5 152.0L753.1 179.9M761.5 193.7L748.0 219.1M761.5 215.8L742.8 237.1M761.5 218.9L742.8 239.9M761.5 229.9L745.7 254.1M761.5 262.9L741.7 282.9M761.5 274.1L740.0 292.0M761.5 289.9L745.7 313.8M761.5 305.7L746.1 334.6M761.5 310.9L748.5 338.5M761.5 321.8L753.1 350.1M761.5 324.2L753.5 351.5M761.5 339.5L755.0 367.7M761.5 395.3L752.5 423.5M761.5 403.8L750.8 431.2M761.5 423.1L748.9 449.2M761.5 449.5L745.1 473.8M761.5 456.4L744.7 479.5M761.5 484.8L744.2 506.5M761.5 489.9L744.2 511.8M761.5 517.8L742.8 539.1M761.5 529.5L742.8 551.9M761.5 537.3L743.2 561.4M761.5 539.4L743.6 559.5M761.5 570.8L752.7 597.4M761.5 574.0L750.5 601.5M761.5 577.8L752.5 605.5M761.5 586.8L748.5 613.5M761.5 596.3L746.1 620.1M761.5 600.5L747.5 626.5M761.5 603.7L749.5 630.5M761.5 609.6L748.5 636.5M761.5 623.7L748.0 649.5M761.5 628.5L746.3 652.3M761.5 655.2L745.5 679.1M761.5 662.6L748.5 687.6M761.5 665.5L749.2 692.1M761.5 670.0L752.2 697.2M761.5 682.6L762.0 697.5M761.5 704.5L736.7 725.2M761.5 707.5L741.1 726.7M761.5 721.5L769.1 703.9M761.5 722.5L790.5 714.9M761.5 725.5L786.1 710.9M826.5 152.0L853.1 138.5M826.5 193.7L851.2 209.1M826.5 215.8L814.3 243.7M826.5 218.9L813.3 245.2M826.5 229.9L828.8 258.9M826.5 262.9L821.8 292.0M826.5 274.1L804.8 292.0M826.5 289.9L816.1 317.2M826.5 305.7L818.5 333.5M826.5 310.9L820.9 339.3M826.5 321.8L830.0 353.5M826.5 339.5L827.5 369.5M826.5 395.3L826.5 424.5M826.5 403.8L825.5 432.5M826.5 423.1L819.9 451.1M826.5 449.5L816.5 477.5M826.5 456.4L814.3 481.9M826.5 484.8L812.4 514.1M826.5 489.9L811.4 511.2M826.5 517.8L811.0 542.1M826.5 529.5L813.7 554.8M826.5 537.3L814.3 565.2M826.5 570.8L846.5 599.3M826.5 574.0L838.3 601.2M826.5 577.8L837.0 614.5M826.5 586.8L822.5 614.5M826.5 603.7L834.1 638.1M826.5 609.5L825.5 637.5M826.5 628.5L822.5 656.5M826.5 655.2L823.6 684.7M826.5 662.6L835.5 694.3M826.5 670.0L842.8 695.0M826.5 682.6L846.5 689.9M826.5 704.5L855.3 712.0M826.5 704.5L847.2 690.6M826.5 707.5L852.4 695.0M826.5 707.5L850.2 707.5M826.5 722.5L848.7 708.3M826.5 725.5L836.9 720.8M826.5 731.5L838.4 722.3" stroke="#fff"/>
<rect x="729" y="827" width="15" height="8" fill="#ff0000"/>
<rect x="729" y="847" width="15" height="8" fill="#00ffff"/>
<rect x="729" y="867" width="15" height="8" fill="#00ff00"/>
<rect x="729" y="887" width="15" height="8" fill="#ff0080"/>
<rect x="729" y="907" width="15" height="8" fill="#c0c000"/>
<rect x="729" y="927" width="15" height="8" fill="#404000"/>
<rect x="1079" y="827" width="15" height="8" fill="#00ff00"/>
<rect x="1079" y="847" width="15" height="8" fill="#ffff00"/>
<rect x="1079" y="867" width="15" height="8" fill="#ff0000"/>
</svg>
<div class="t" style="top:14px;left:62px;font-size:16.5px;line-height:19px;font-weight:bold">Station: 06610 Payerne (LSMP)</div>
<div class="t" style="top:14px;left:330px;font-size:16.5px;line-height:19px;font-weight:bold">Date: 20.06.2021</div>
<div class="t" style="top:14px;left:480px;font-size:16.5px;line-height:19px;font-weight:bold">Time: 0800Z</div>
<div class="t" style="top:19px;left:561px;width:400px;text-align:center;color:#00ff00;font-weight:bold">OBS</div>
<div class="t" style="top:19px;left:627px;width:400px;text-align:center;color:#ff0080;font-weight:bold">SR</div>
<div class="t" style="top:43px;right:1313px">100</div>
<div class="t" style="top:314px;right:1313px">200</div>
<div class="t" style="top:442px;right:1313px">300</div>
<div class="t" style="top:522px;right:1313px">400</div>
<div class="t" style="top:579px;right:1313px">500</div>
<div class="t" style="top:623px;right:1313px">600</div>
<div class="t" style="top:658px;right:1313px">700</div>
<div class="t" style="top:687px;right:1313px">800</div>
<div class="t" style="top:712px;right:1313px">900</div>
<div class="t" style="top:733px;right:1313px">1000</div>
<div class="t" style="top:313px;left:670px">12134m</div>
<div class="t" style="top:441px;left:670px">9496m</div>
<div class="t" style="top:521px;left:670px">7459m</div>
<div class="t" style="top:578px;left:670px">5781m</div>
<div class="t" style="top:622px;left:670px">4357m</div>
<div class="t" style="top:657px;left:670px">3118m</div>
<div class="t" style="top:686px;left:670px">2006m</div>
<div class="t" style="top:711px;left:670px">1005m</div>
<div class="t" style="top:756px;left:-139px;width:400px;text-align:center">50</div>
<div class="t" style="top:756px;right:1312.2px">-</div>
<div class="t" style="top:794px;left:-139px;width:400px;text-align:center">0</div>
<div class="t" style="top:831px;left:-139px;width:400px;text-align:center">0</div>
<div class="t" style="top:756px;left:-79px;width:400px;text-align:center">40</div>
<div class="t" style="top:756px;right:1252.2px">-</div>
<div class="t" style="top:794px;left:-79px;width:400px;text-align:center">10</div>
<div class="t" style="top:831px;left:-79px;width:400px;text-align:center">300</div>
<div class="t" style="top:756px;left:-19px;width:400px;text-align:center">30</div>
<div class="t" style="top:756px;right:1192.2px">-</div>
<div class="t" style="top:794px;left:-19px;width:400px;text-align:center">20</div>
<div class="t" style="top:831px;left:-19px;width:400px;text-align:center">600</div>
<div class="t" style="top:756px;left:41px;width:400px;text-align:center">20</div>
<div class="t" style="top:756px;right:1132.2px">-</div>
<div class="t" style="top:794px;left:41px;width:400px;text-align:center">30</div>
<div class="t" style="top:831px;left:41px;width:400px;text-align:center">900</div>
<div class="t" style="top:756px;left:101px;width:400px;text-align:center">10</div>
<div class="t" style="top:756px;right:1072.2px">-</div>
<div class="t" style="top:794px;left:101px;width:400px;text-align:center">40</div>
<div class="t" style="top:831px;left:101px;width:400px;text-align:center">1200</div>
<div class="t" style="top:756px;left:161px;width:400px;text-align:center">0</div>
<div class="t" style="top:794px;left:161px;width:400px;text-align:center">50</div>
<div class="t" style="top:831px;left:161px;width:400px;text-align:center">1500</div>
<div class="t" style="top:756px;left:221px;width:400px;text-align:center">10</div>
<div class="t" style="top:794px;left:221px;width:400px;text-align:center">60</div>
<div class="t" style="top:831px;left:221px;width:400px;text-align:center">1800</div>
<div class="t" style="top:756px;left:281px;width:400px;text-align:center">20</div>
<div class="t" style="top:794px;left:281px;width:400px;text-align:center">70</div>
<div class="t" style="top:831px;left:281px;width:400px;text-align:center">2100</div>
<div class="t" style="top:756px;left:341px;width:400px;text-align:center">30</div>
<div class="t" style="top:794px;left:341px;width:400px;text-align:center">80</div>
<div class="t" style="top:831px;left:341px;width:400px;text-align:center">2400</div>
<div class="t" style="top:756px;left:401px;width:400px;text-align:center">40</div>
<div class="t" style="top:794px;left:401px;width:400px;text-align:center">90</div>
<div class="t" style="top:831px;left:401px;width:400px;text-align:center">2700</div>
<div class="t" style="top:756px;left:461px;width:400px;text-align:center">50</div>
<div class="t" style="top:794px;left:461px;width:400px;text-align:center">100</div>
<div class="t" style="top:831px;left:461px;width:400px;text-align:center">3000</div>
<div class="t" style="top:868px;left:-139px;width:400px;text-align:center">100</div>
<div class="t" style="top:868px;right:1315.8px">-</div>
<div class="t" style="top:868px;left:-64px;width:400px;text-align:center">50</div>
<div class="t" style="top:868px;right:1237.2px">-</div>
<div class="t" style="top:868px;left:11px;width:400px;text-align:center">0</div>
<div class="t" style="top:868px;left:86px;width:400px;text-align:center">50</div>
<div class="t" style="top:868px;left:161px;width:400px;text-align:center">100</div>
<div class="t" style="top:868px;left:236px;width:400px;text-align:center">150</div>
<div class="t" style="top:868px;left:311px;width:400px;text-align:center">200</div>
<div class="t" style="top:868px;left:386px;width:400px;text-align:center">250</div>
<div class="t" style="top:868px;left:461px;width:400px;text-align:center">300</div>
<div class="t" style="top:769px;left:161.5px;width:400px;text-align:center;letter-spacing:0.19px">Temperature, Dewpoint [ °C ]</div>
<div class="t" style="top:806px;left:160.5px;width:400px;text-align:center;letter-spacing:0.35px">Windspeed [ knt ]</div>
<div class="t" style="top:845px;left:161.2px;width:400px;text-align:center;letter-spacing:0.05px">CAPE, CINH * 5 [ J/kg ]</div>
<div class="t" style="top:881px;left:161.5px;width:400px;text-align:center;letter-spacing:0.19px">Storm Relative Helicity [ m^2/s^2 ]</div>
<div class="t" style="top:824px;left:753px;color:#ff0000">Temperature Profile</div>
<div class="t" style="top:844px;left:753px;color:#00ffff">Dewpoint Profile</div>
<div class="t" style="top:864px;left:753px;color:#00ff00">OBS Windspeed Profile</div>
<div class="t" style="top:884px;left:753px;color:#ff0080">SR Windspeed Profile</div>
<div class="t" style="top:904px;left:753px;color:#c0c000">Sfc-3km Storm Relative Helicity Profile</div>
<div class="t" style="top:924px;left:753px;color:#404000">Effective Layer (CAPE &gt;= 100 J/kg)</div>
<div class="t" style="top:824px;left:1103px;color:#00ff00">No / Non Severe Thunderstorms</div>
<div class="t" style="top:844px;left:1103px;color:#ffff00">Scattered / Moderate Thunderstorms</div>
<div class="t" style="top:864px;left:1103px;color:#ff0000">Widespread / Severe Thunderstorms</div>
<div class="t" style="top:28px;left:894px;text-decoration:underline">Parameter</div>
<div class="t" style="top:28px;right:242px;text-decoration:underline">Value LCL</div>
<div class="t" style="top:28px;right:152px;text-decoration:underline">Value CCL</div>
<div class="t" style="top:28px;left:1230px;text-decoration:underline">Unit</div>
<div class="t" style="top:91px;left:894px;text-decoration:underline">Parcels: Using 50mB mean layer LCL + CCL</div>
<div class="t" style="top:344px;left:894px;text-decoration:underline">Convective Indices</div>
<div class="t" style="top:592px;left:894px;text-decoration:underline">Wind Parameters</div>
<div class="t" style="top:50px;left:894px">Convective Temperature:</div>
<div class="t" style="top:50px;right:242px;color:#ff0000">28.51</div>
<div class="t" style="top:50px;left:1230px">[°C]</div>
<div class="t" style="top:67px;left:894px">Snowfall Height:</div>
<div class="t" style="top:67px;right:242px">3891.81</div>
<div class="t" style="top:67px;left:1230px">[m]</div>
<div class="t" style="top:112px;left:894px">Lifted Index:</div>
<div class="t" style="top:112px;right:242px;color:#ff0000">-1.32</div>
<div class="t" style="top:112px;right:152px;color:#ff0000">-4.54</div>
<div class="t" style="top:112px;left:1230px">[°C]</div>
<div class="t" style="top:129px;left:894px">CAPE ML:</div>
<div class="t" style="top:129px;right:242px;color:#ff0000">760.83</div>
<div class="t" style="top:129px;right:152px;color:#ff0000">2164.81</div>
<div class="t" style="top:129px;left:1230px">[J/kg]</div>
<div class="t" style="top:146px;left:894px">CINH | LSI (Inversion: 838mB):</div>
<div class="t" style="top:146px;right:242px;color:#ffff00">130.55</div>
<div class="t" style="top:146px;left:1124px">,</div>
<div class="t" style="top:146px;left:1136px;color:#ffff00">2.17</div>
<div class="t" style="top:146px;left:1230px">[J/kg], [°C]</div>
<div class="t" style="top:163px;left:894px">CAPE SFC:</div>
<div class="t" style="top:163px;right:242px;color:#ff0000">927.32</div>
<div class="t" style="top:163px;right:152px;color:#ff0000">2332.62</div>
<div class="t" style="top:163px;left:1230px">[J/kg]</div>
<div class="t" style="top:180px;left:894px">CAPE MU | CINH MU:</div>
<div class="t" style="top:180px;right:242px;color:#ff0000">927.32</div>
<div class="t" style="top:180px;left:1124px">,</div>
<div class="t" style="top:180px;left:1136px;color:#ff0000">119.06</div>
<div class="t" style="top:180px;left:1230px">[J/kg]</div>
<div class="t" style="top:197px;left:894px">3km SFC CAPE | IL CAPE:</div>
<div class="t" style="top:197px;right:242px;color:#00ff00">15.74</div>
<div class="t" style="top:197px;left:1124px">,</div>
<div class="t" style="top:197px;left:1136px;color:#ff0000">514.14</div>
<div class="t" style="top:197px;left:1230px">[J/kg]</div>
<div class="t" style="top:214px;left:894px">DCAPE (LFS = 581mB):</div>
<div class="t" style="top:214px;right:242px;color:#ffff00">354.73</div>
<div class="t" style="top:214px;left:1230px">[J/kg]</div>
<div class="t" style="top:231px;left:894px">850-600 Lapse Rate:</div>
<div class="t" style="top:231px;right:242px;color:#ffff00">18.90</div>
<div class="t" style="top:231px;left:1230px">[°C]</div>
<div class="t" style="top:248px;left:894px">FM Hail Size | SHIP | LHP:</div>
<div class="t" style="top:248px;right:242px;color:#ff0000">2.5 - 3.8</div>
<div class="t" style="top:248px;left:1124px">,</div>
<div class="t" style="top:248px;left:1136px"><span style="color:#00ff00">0.75</span>,</div>
<div class="t" style="top:248px;left:1173px;color:#ffff00">4.24</div>
<div class="t" style="top:248px;left:1230px">[cm], [1], [1]</div>
<div class="t" style="top:265px;left:894px">Estofex Exp. Hail Param:</div>
<div class="t" style="top:265px;right:242px;color:#ffff00">1.17</div>
<div class="t" style="top:265px;left:1230px">[cm]</div>
<div class="t" style="top:282px;left:894px">Max. Hail Size (OLD, MU, IL):</div>
<div class="t" style="top:282px;right:242px;color:#ff0000">4.50</div>
<div class="t" style="top:282px;left:1124px">,</div>
<div class="t" style="top:282px;left:1136px"><span style="color:#ff0000">3.66</span>,</div>
<div class="t" style="top:282px;left:1173px;color:#ff0000">3.56</div>
<div class="t" style="top:282px;left:1230px">[cm]</div>
<div class="t" style="top:302px;left:894px">LCL / CCL (AGL):</div>
<div class="t" style="top:302px;right:242px;color:#ff0000">674.90</div>
<div class="t" style="top:302px;right:152px;color:#ffff00">1489.08</div>
<div class="t" style="top:302px;left:1230px">[m]</div>
<div class="t" style="top:319px;left:894px">Convective Height:</div>
<div class="t" style="top:319px;right:242px;color:#ff0000">10.73</div>
<div class="t" style="top:319px;right:152px;color:#ff0000">10.25</div>
<div class="t" style="top:319px;left:1230px">[km]</div>
<div class="t" style="top:364px;left:894px">Showalter Index:</div>
<div class="t" style="top:364px;right:242px;color:#ffff00">0.96</div>
<div class="t" style="top:364px;left:1230px">[°C]</div>
<div class="t" style="top:381px;left:894px">Modified Thompson Index:</div>
<div class="t" style="top:381px;right:242px;color:#ff0000">39.76</div>
<div class="t" style="top:381px;left:1230px">[°C]</div>
<div class="t" style="top:398px;left:894px">Total Totals Index:</div>
<div class="t" style="top:398px;right:242px;color:#ffff00">46.10</div>
<div class="t" style="top:398px;left:1230px">[°C]</div>
<div class="t" style="top:415px;left:894px">KO Index:</div>
<div class="t" style="top:415px;right:242px;color:#ff0000">-9.51</div>
<div class="t" style="top:415px;left:1230px">[1]</div>
<div class="t" style="top:432px;left:894px">Craven SigSvr / 1000:</div>
<div class="t" style="top:432px;right:242px;color:#ff0000">17.87</div>
<div class="t" style="top:432px;left:1230px">[m^3/s^3]</div>
<div class="t" style="top:449px;left:894px">SCP RM (new, old):</div>
<div class="t" style="top:449px;right:242px;color:#ffff00">0.68</div>
<div class="t" style="top:449px;left:1124px">,</div>
<div class="t" style="top:449px;left:1136px;color:#ff0000">4.25</div>
<div class="t" style="top:449px;left:1230px">[1]</div>
<div class="t" style="top:466px;left:894px">STP (new, old):</div>
<div class="t" style="top:466px;right:242px;color:#ff0000">0.16</div>
<div class="t" style="top:466px;left:1124px">,</div>
<div class="t" style="top:466px;left:1136px;color:#ff0000">0.29</div>
<div class="t" style="top:466px;left:1230px">[1]</div>
<div class="t" style="top:483px;left:894px">SB STP (fix) | CWASP:</div>
<div class="t" style="top:483px;right:242px;color:#ff0000">0.35</div>
<div class="t" style="top:483px;left:1124px">,</div>
<div class="t" style="top:483px;left:1136px;color:#ff0000">68.69</div>
<div class="t" style="top:483px;left:1230px">[1], [%]</div>
<div class="t" style="top:500px;left:894px">DCP | MMP | MSP:</div>
<div class="t" style="top:500px;right:242px;color:#ff0000">0.62</div>
<div class="t" style="top:500px;left:1124px">,</div>
<div class="t" style="top:500px;left:1136px"><span style="color:#ff0000">95.86</span>,</div>
<div class="t" style="top:500px;left:1180px;color:#00ff00">59.32</div>
<div class="t" style="top:500px;left:1230px">[1], [%], [%]</div>
<div class="t" style="top:517px;left:894px">MB Comp | SHERBE:</div>
<div class="t" style="top:517px;right:242px;color:#00ff00">0.00</div>
<div class="t" style="top:517px;left:1124px">,</div>
<div class="t" style="top:517px;left:1136px;color:#ff0000">1.08</div>
<div class="t" style="top:517px;left:1230px">[1], [1]</div>
<div class="t" style="top:534px;left:894px">Exp. Supercell Index CH:</div>
<div class="t" style="top:534px;right:242px;color:#ff0000">4.63</div>
<div class="t" style="top:534px;left:1230px">[1]</div>
<div class="t" style="top:551px;left:894px">SWISS 12 Index:</div>
<div class="t" style="top:551px;right:242px;color:#ff0000">-13.97</div>
<div class="t" style="top:551px;left:1230px">[1]</div>
<div class="t" style="top:568px;left:894px">Precipitable Water:</div>
<div class="t" style="top:568px;right:242px;color:#ff0000">34.26</div>
<div class="t" style="top:568px;left:1230px">[mm]</div>
<div class="t" style="top:613px;left:894px">Storm Direction | Motion:</div>
<div class="t" style="top:613px;right:242px">229.74</div>
<div class="t" style="top:613px;left:1124px">,</div>
<div class="t" style="top:613px;left:1136px;color:#ff0000">25.11</div>
<div class="t" style="top:613px;left:1230px">[°], [knt]</div>
<div class="t" style="top:630px;left:894px">500m Critical Angle:</div>
<div class="t" style="top:630px;right:242px;color:#ff0000">96.30</div>
<div class="t" style="top:630px;left:1230px">[°]</div>
<div class="t" style="top:650px;left:894px">SR Wind Sfc-2km:</div>
<div class="t" style="top:650px;right:242px;color:#ff0000">16.75</div>
<div class="t" style="top:650px;left:1230px">[knt]</div>
<div class="t" style="top:667px;left:894px">SR Wind 4km-6km:</div>
<div class="t" style="top:667px;right:242px;color:#ff0000">18.49</div>
<div class="t" style="top:667px;left:1230px">[knt]</div>
<div class="t" style="top:684px;left:894px">SR Wind 9km-11km:</div>
<div class="t" style="top:684px;right:242px;color:#ff0000">47.08</div>
<div class="t" style="top:684px;left:1230px">[knt] CL</div>
<div class="t" style="top:704px;left:894px">Effective Shear 6000:</div>
<div class="t" style="top:704px;right:242px;color:#ff0000">45.66</div>
<div class="t" style="top:704px;left:1230px">[knt]</div>
<div class="t" style="top:724px;left:894px">Bulk Richardson Number:</div>
<div class="t" style="top:724px;right:242px;color:#00ff00">5.64</div>
<div class="t" style="top:724px;right:152px;color:#ffff00">16.04</div>
<div class="t" style="top:724px;left:1230px">[1]</div>
<div class="t" style="top:744px;left:894px">3km Effective SRH:</div>
<div class="t" style="top:744px;right:242px;color:#ff0000">135.99</div>
<div class="t" style="top:744px;left:1230px">[m^2/s^2]</div>
<div class="t" style="top:761px;left:894px">Max 3km SRH (0-2km) | AGL:</div>
<div class="t" style="top:761px;right:242px;color:#ff0000">260.54</div>
<div class="t" style="top:761px;left:1124px">,</div>
<div class="t" style="top:761px;left:1136px;color:#00ff00">1985.00</div>
<div class="t" style="top:761px;left:1230px">[m^2/s^2], [m]</div>
<div class="t" style="top:781px;left:894px">3km Energy Helicity Index:</div>
<div class="t" style="top:781px;right:242px;color:#ff0000">0.65</div>
<div class="t" style="top:781px;right:152px;color:#ff0000">1.84</div>
<div class="t" style="top:781px;left:1230px">[1]</div>
<div class="t" style="top:798px;left:894px">3km Vorticity Gen. Pot.:</div>
<div class="t" style="top:798px;right:242px;color:#ff0000">0.20</div>
<div class="t" style="top:798px;right:152px;color:#ff0000">0.33</div>
<div class="t" style="top:798px;left:1230px">[m/s^2]</div>
<div class="t" style="top:608px;left:71px;color:#ffff00">CAPE</div>
<div class="t" style="top:637px;left:71px;color:#f08000">CINH * 5</div>
<div class="t" style="top:707px;left:629px;color:#ff00ff">LCL</div>
</body></html>
